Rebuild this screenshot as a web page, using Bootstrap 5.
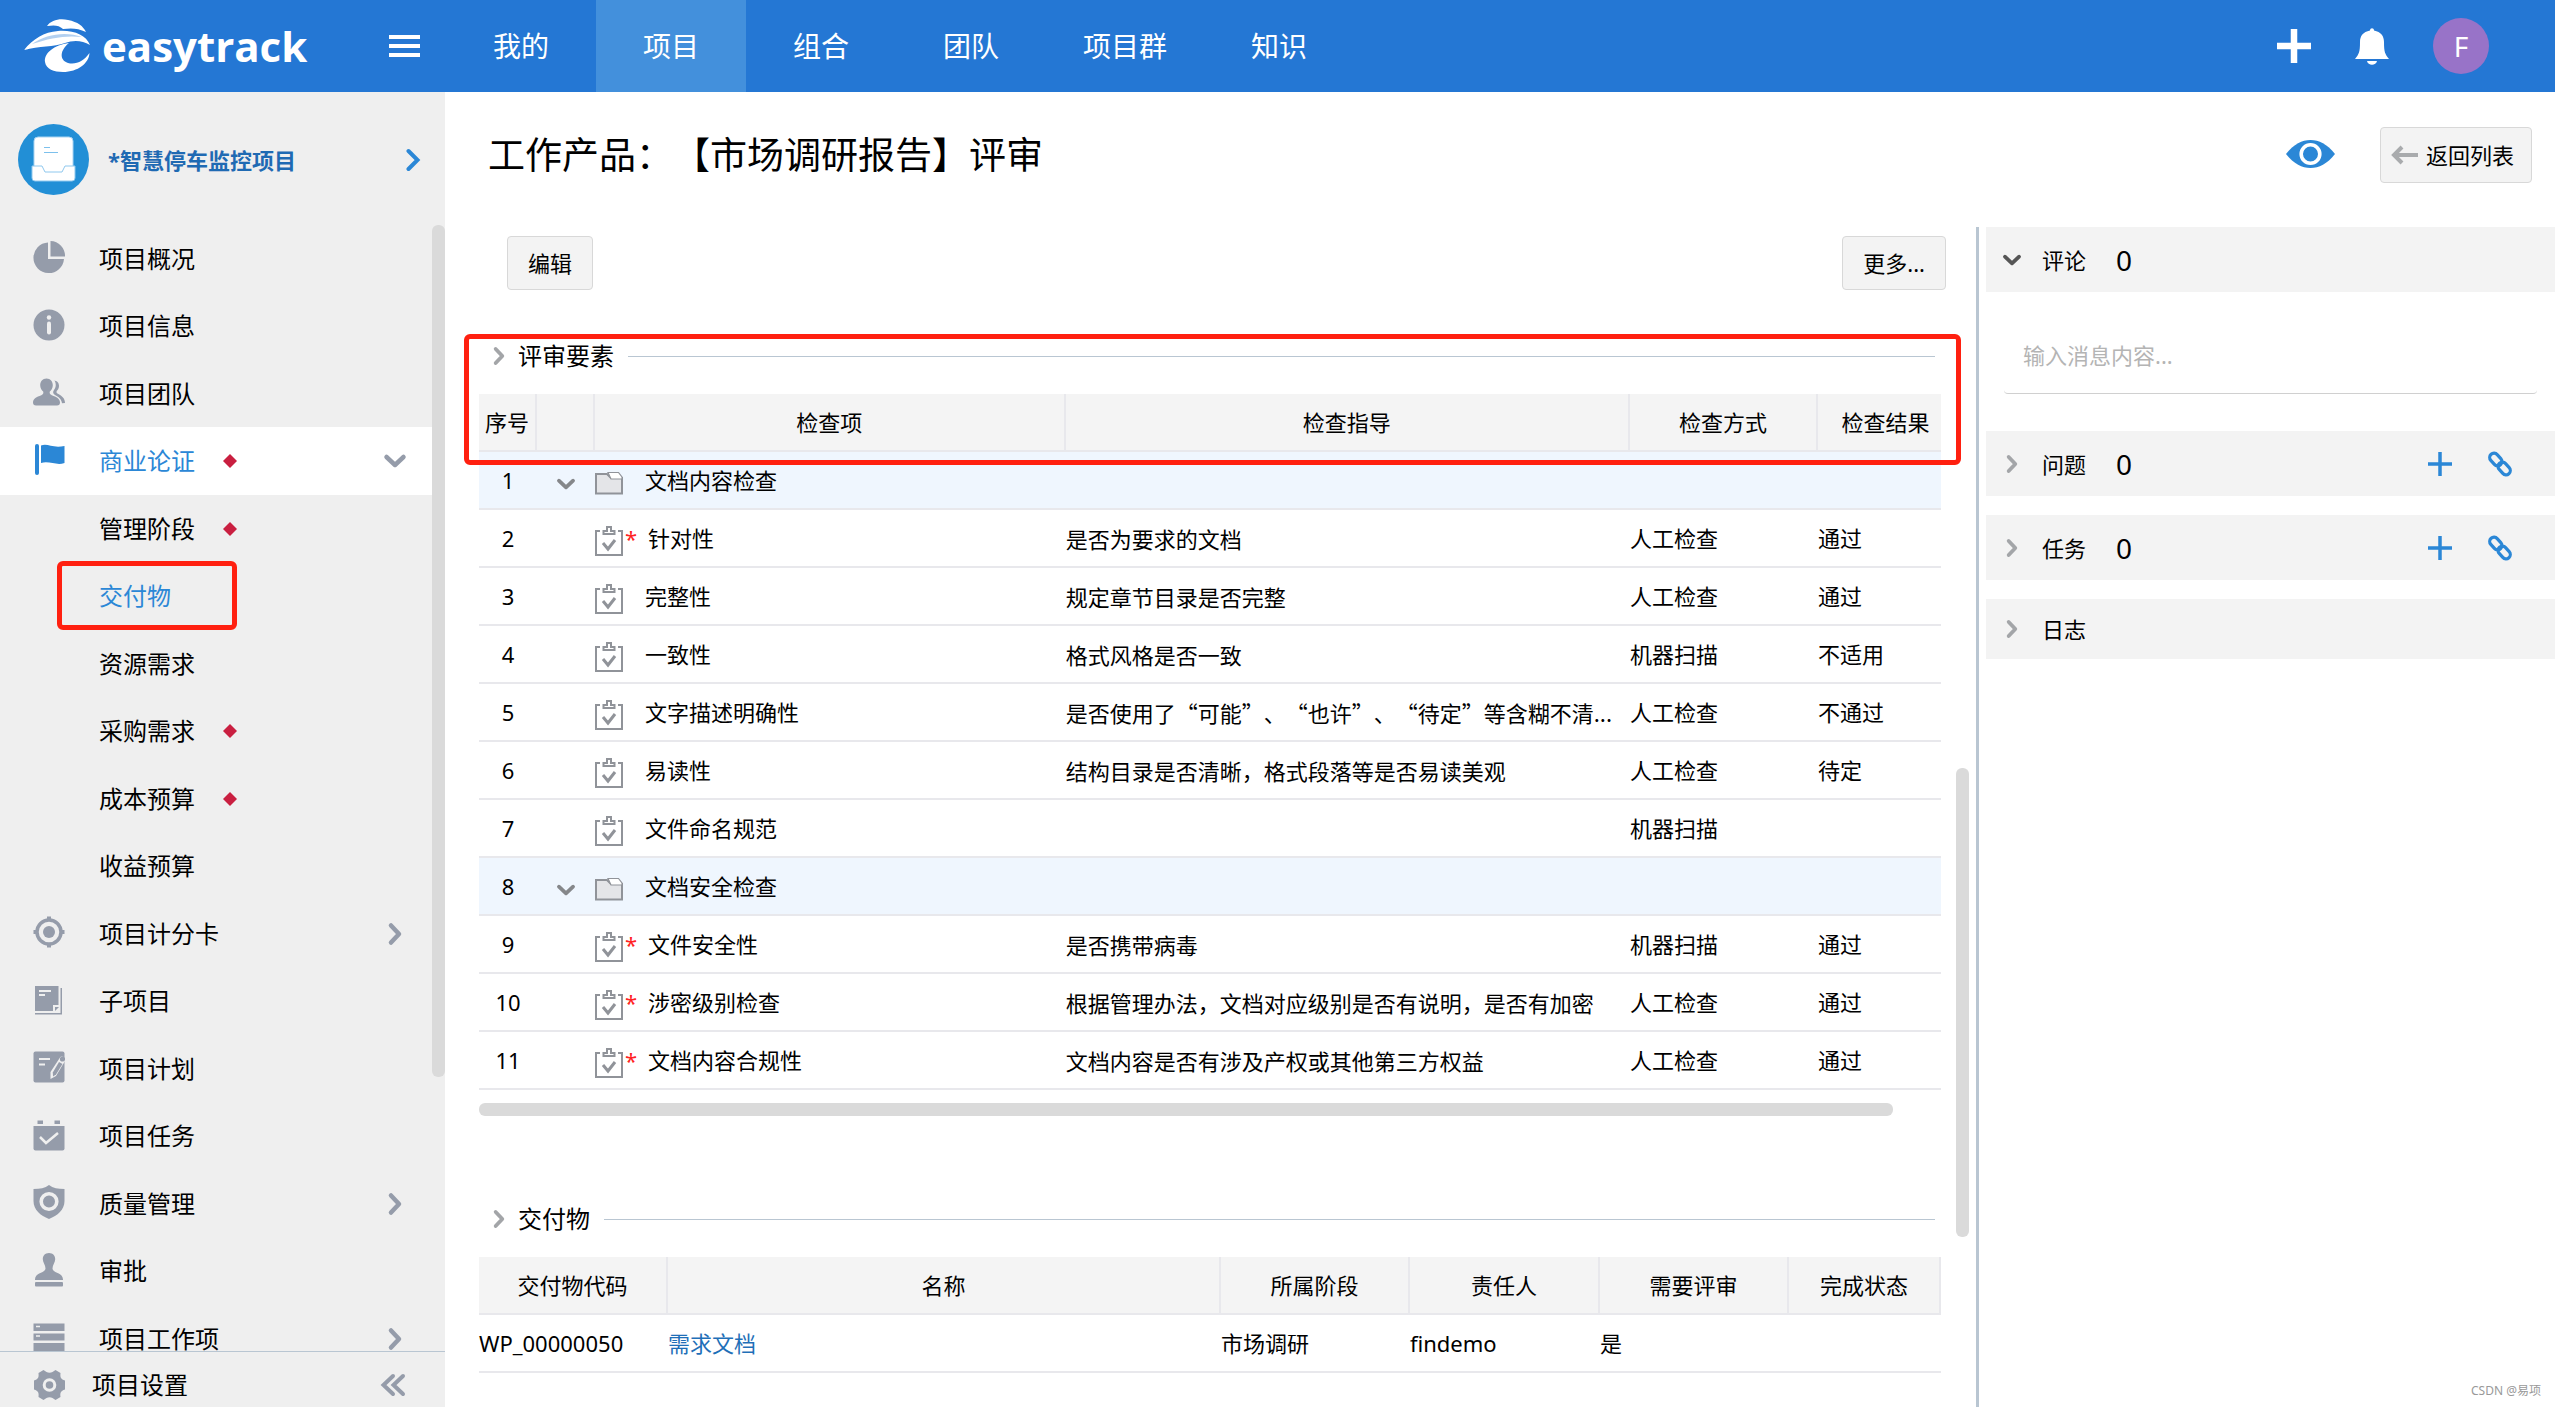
<!DOCTYPE html>
<html lang="zh-CN">
<head>
<meta charset="utf-8">
<meta name="viewport" content="width=device-width, initial-scale=1">
<title>easytrack</title>
<link href="https://cdn.jsdelivr.net/npm/bootstrap@5.3.0/dist/css/bootstrap.min.css" rel="stylesheet">
<style>
  :root { --bar: #2477d4; --blue: #2b87d6; --line: #b9c6d2; --grey: #959caa; --thumb: #dadada; --mark: #ff2010; }
  body { font-family: "Noto Sans", "Noto Sans CJK SC", sans-serif; font-size: 22px; line-height: 32px; color: #000; background: #fff; text-spacing-trim: space-all; }
  svg { display: block; flex: none; }
  button { color: inherit; }
  .icon-btn { border: 0; background: none; padding: 0; }

  /* top bar */
  .topbar { background: var(--bar); height: 92px; color: #fff; padding: 0 66px 0 24px; }
  .brand { width: 365px; gap: 11px; color: #fff; text-decoration: none; font-family: "Open Sans", "Noto Sans", sans-serif; font-weight: 700; font-size: 42px; line-height: 52px; }
  .topnav { margin-left: 26px; }
  .topnav .nav-link { color: #fff; font-size: 28px; line-height: 92px; min-width: 150px; padding: 0 37px; text-align: center; border-radius: 0; }
  .topnav .nav-link.active { background: #4390dc; }
  .avatar { width: 56px; height: 56px; background: #9873c8; font-size: 28px; }

  /* sidebar */
  .sidebar { width: 445px; background: #efefef; }
  .project { height: 133px; padding: 2px 24px 0 18px; gap: 19px; font-weight: 700; color: #1f6ab3; text-decoration: none; }
  .side-link { height: 67px; padding: 0 25px 0 33px; color: #000; font-size: 24px; line-height: 24px; text-decoration: none; position: relative; }
  .side-link:nth-child(even) { height: 68px; }
  .side-link .pic { width: 32px; height: 36px; margin: 0 34px 3px 0; color: var(--grey); }
  .side-link .dot { margin-left: 28px; }
  .side-link .arrow { margin-left: auto; color: var(--grey); }
  .side-link.current { background: #fff; color: #2b87d6; }
  .side-link.current .pic, .side-link.picked { color: var(--blue); }
  .side-thumb { width: 13px; height: 852px; max-height: 80%; border-radius: 6px; background: var(--thumb); }
  .side-foot { height: 56px; border-top: 1px solid var(--line); padding: 10px 39px 0 33px; font-size: 24px; color: var(--grey); }
  .side-foot a { color: #000; text-decoration: none; margin-left: 26px; }
  .callout { position: absolute; border: 5px solid var(--mark); border-radius: 6px; pointer-events: none; z-index: 2; }
  .callout-side { left: 57px; width: 180px; top: -1px; bottom: 0; }
  .callout-table { left: -15px; right: -20px; top: -6px; height: 131px; }

  /* page head */
  .page-head { height: 135px; padding: 0 23px 10px 43px; }
  .page-title { font-size: 37px; line-height: 52px; font-weight: 400; }
  .watch { margin: 0 45px 2px auto; }
  .tool-btn { background: #f3f3f3; border: 1px solid #d8d8d8; border-radius: 4px; font-size: 22px; line-height: 32px; color: #000; height: 54px; padding: 0 20px; }
  .tool-btn.back { height: 56px; padding: 0 17px 0 10px; gap: 8px; }
  .toolbar { padding: 9px 0 0 28px; margin-right: -5px; }

  /* content */
  .work { padding-left: 34px; }
  .gutter { width: 35px; padding: 541px 7px 0 15px; }
  .gutter div { width: 13px; height: 469px; border-radius: 6px; background: var(--thumb); }
  .fold { position: relative; margin-top: 50px; }
  .fold.second { margin-top: 87px; }
  .fold-head { height: 32px; margin: 0 6px 22px 10px; font-size: 24px; }
  .fold-head h2 { font-size: 24px; line-height: 32px; font-weight: 400; margin: 0 14px 0 9px; }
  .fold-head hr { margin: 0; border-color: var(--line); opacity: 1; }
  .sheet { table-layout: fixed; border-collapse: separate; border-spacing: 0; margin: 0; color: #000; --bs-table-color: #000; }
  .sheet > :not(caption) > * > * { height: 58px; padding: 0; border: 0; border-bottom: 2px solid #e8e8ec; vertical-align: middle; white-space: nowrap; color: #000; }
  .sheet > thead > tr > th { background: #f4f4f4; font-weight: 400; text-align: center; border-right: 2px solid #e8e8ec; }
  .sheet.checks > thead > tr > th:last-child { border-right: 0; padding-left: 12px; }
  .sheet > tbody > tr.group > td { background: #eff6fe; }
  .sheet .no { text-align: center; }
  .sheet .guide { font-family: "Noto Sans CJK SC", sans-serif; overflow: hidden; }
  .sheet a { color: #1f6fb8; text-decoration: none; }
  .item { display: flex; align-items: center; }
  .item svg { margin: 6px 22px 0 0; }
  .item.must svg { margin-right: 2px; }
  .item .star { width: 9px; margin-right: 14px; color: #f22; }
  .hthumb { height: 13px; width: 97%; max-width: calc(100% - 48px); margin-top: 13px; border-radius: 6px; background: var(--thumb); }

  /* side panels */
  .panels { width: 579px; border-left: 3px solid var(--line); padding-left: 7px; }
  .panel-head { height: 65px; background: #f3f3f3; padding: 0 42px 0 16px; margin-bottom: 19px; }
  .panel-head.open { margin-bottom: 24px; }
  .panel-head.short { height: 60px; }
  .panel-head .toggle { border: 0; background: none; padding: 0; gap: 20px; }
  .panel-head .num { font-size: 28px; margin-left: 30px; }
  .panel-head .ops { gap: 35px; color: var(--blue); }
  .message { height: 78px; margin: 0 18px 37px 18px; width: auto; border: 0; border-bottom: 1px solid #d0d0d0; border-radius: 4px; padding: 0 19px; font-size: 22px; }
  .message::placeholder { color: #b4b4b4; }
  .stamp { position: absolute; right: 14px; bottom: 8px; font-size: 12px; line-height: 16px; color: #999; }
</style>
</head>
<body class="vh-100 overflow-hidden d-flex flex-column">

<svg width="0" height="0" class="position-absolute" aria-hidden="true">
  <symbol id="i-right" viewBox="0 0 24 24"><path d="M8 3.500l8 8.500-8 8.500" fill="none" stroke="currentColor" stroke-width="4.500" stroke-linecap="round" stroke-linejoin="round"/></symbol>
  <symbol id="i-down" viewBox="0 0 24 24"><path d="M3.500 8l8.500 8 8.500-8" fill="none" stroke="currentColor" stroke-width="4.500" stroke-linecap="round" stroke-linejoin="round"/></symbol>
  <symbol id="i-dot" viewBox="0 0 14 14"><path d="M7 0l7 7-7 7-7-7z" fill="#c91f40"/></symbol>
  <symbol id="i-pie" viewBox="0 0 32 32"><path d="M15 1.500V18h16A15.300 15.300 0 1 1 15 1.500z" fill="currentColor"/><path d="M17.500 0A15 15 0 0 1 32 15.500H17.500z" fill="currentColor"/></symbol>
  <symbol id="i-info" viewBox="0 0 32 32"><circle cx="16" cy="16" r="15.500" fill="currentColor"/><circle cx="16" cy="8.500" r="2.200" fill="#efefef"/><rect x="14" y="12.500" width="4" height="13" rx="2" fill="#efefef"/></symbol>
  <symbol id="i-team" viewBox="0 0 32 32"><path d="M13.500 2.500c4 0 6.300 3 6.300 6.800 0 3-1.500 5-3 6.200-.5 2 .2 3 2 3.700 4.700 1.800 8.200 3.300 8.200 7.300 0 2-1 3-3 3H3c-2 0-3-1-3-3 0-4 3.500-5.500 8.300-7.300 1.800-.7 2.400-1.700 1.900-3.700-1.500-1.200-3-3.200-3-6.200 0-3.800 2.300-6.800 6.300-6.800z" fill="currentColor"/><path d="M20.500 4.500c4 0 5.500 2.800 5.500 5.500s-1.500 4-2.300 5c-.5 1.500 0 2 1.200 2.800 3.500 2 7.100 4.200 7.100 9.200l-3 .3c-.5-4.300-3.500-6.300-7-8.300-2-1.200-2.500-3-1-5 2-2.500 2.500-6 .5-9.500z" fill="currentColor"/></symbol>
  <symbol id="i-flag" viewBox="0 0 32 32"><rect x="2" y="0" width="4" height="31" rx="2" fill="currentColor"/><path d="M8 1.500c7-2.500 11 3 23.500.5v17c-8 3-15-2.500-23.500 0z" fill="currentColor"/></symbol>
  <symbol id="i-target" viewBox="0 0 32 32"><circle cx="16" cy="16" r="12" fill="none" stroke="currentColor" stroke-width="3.500"/><circle cx="16" cy="16" r="6" fill="currentColor"/><path d="M14 .5h4V5h-4zM14 27h4v4.500h-4zM.5 14H5v4H.5zM27 14h4.500v4H27z" fill="currentColor"/></symbol>
  <symbol id="i-book" viewBox="0 0 32 32"><path d="M2 2h23.500v19H20v6H2z" fill="currentColor"/><path d="M27.500 4H29v26.500H2V29h25.500zM22 23h4l-4 4z" fill="currentColor"/><path d="M6 7h12M6 11h6" stroke="#efefef" stroke-width="1.800"/></symbol>
  <symbol id="i-plan" viewBox="0 0 32 32"><rect x=".5" y=".5" width="31" height="31" rx="2" fill="currentColor"/><path d="M6 8h11M6 13.500h6" stroke="#efefef" stroke-width="2"/><path d="M17.500 21L27 6.500c1-1.800 4-1 5 .7V10L23 25l-5.500 3z" fill="#efefef"/><path d="M19.800 21.500L26 11l3.500 2-6.500 10.500-3 2z" fill="currentColor"/><circle cx="29.500" cy="8" r="2.600" fill="currentColor"/></symbol>
  <symbol id="i-task" viewBox="0 0 32 32"><path d="M.5 7h31v22.500a2 2 0 0 1-2 2h-27a2 2 0 0 1-2-2z" fill="currentColor"/><path d="M4.500 1.500h5.500V5H4.500zM21.500 1.500H27V5h-5.500z" fill="currentColor"/><path d="M7 18l6 6L25 14" fill="none" stroke="#efefef" stroke-width="2.500"/></symbol>
  <symbol id="i-shield" viewBox="0 0 32 34"><path d="M16 0c4 3 9 4 15.500 4v12c0 9-7 14.500-15.500 18C7.500 30.500.5 25 .5 16V4C7 4 12 3 16 0z" fill="currentColor"/><circle cx="16" cy="16.500" r="7.800" fill="none" stroke="#efefef" stroke-width="3.600"/></symbol>
  <symbol id="i-stamp" viewBox="0 0 32 34"><path d="M16 0c4 0 6.200 2.800 6.200 6.300 0 3.200-2.700 5.700-2.700 9.200 0 4.500 10.500 4 10.500 11V27H2v-.5c0-7 10.500-6.500 10.500-11 0-3.500-2.700-6-2.700-9.200C9.800 2.800 12 0 16 0z" fill="currentColor"/><rect x="2" y="29" width="28" height="4.500" rx="1" fill="currentColor"/></symbol>
  <symbol id="i-rows" viewBox="0 0 32 32"><path d="M.5 2.500h31V10H.5zM.5 12.500h31V19.500H.5zM.5 22h31v8H.5z" fill="currentColor"/><path d="M3 5.500h4M3 15h4" stroke="#efefef" stroke-width="1.500"/></symbol>
  <symbol id="i-gear" viewBox="0 0 32 32"><path d="M10 1l3 2c2 1 4 1 6 0l3-2 5 3c-.5 5 .5 6 4.500 7.500v9C27 22 26.500 24 27 28l-5 3-3-2c-2-1-4-1-6 0l-3 2-5-3c.5-4 0-6-4.500-7.500v-9C4.500 10 5.500 9 5 4z" fill="currentColor"/><circle cx="16" cy="16" r="5.300" fill="none" stroke="#efefef" stroke-width="3"/></symbol>
  <symbol id="i-dbl" viewBox="0 0 26 24"><path d="M13 3l-9.500 9 9.500 9M23 3l-9.500 9 9.500 9" fill="none" stroke="currentColor" stroke-width="4" stroke-linecap="round"/></symbol>
  <symbol id="i-clip" viewBox="0 0 28 30"><path d="M5 5H1v24h26V5h-4" fill="none" stroke="#909399" stroke-width="2"/><path d="M8.500 8V5H12V1h4v4h3.500v3z" fill="none" stroke="#909399" stroke-width="2"/><path d="M8 17l5 6 7-9" fill="none" stroke="#909399" stroke-width="3"/></symbol>
  <symbol id="i-folder" viewBox="0 0 28 24"><path d="M1 3h11l4 4h11v15.500H1z" fill="#e4e5e8" stroke="#909399" stroke-width="2"/><path d="M13 1.500h10.500L27 6v2H16z" fill="#fff" stroke="#909399" stroke-width="1.200"/></symbol>
  <symbol id="i-plus" viewBox="0 0 24 24"><path d="M12 0v24M0 12h24" stroke="currentColor" stroke-width="3.500"/></symbol>
  <symbol id="i-link" viewBox="0 0 26 26"><g fill="none" stroke="currentColor" stroke-width="3.200"><rect x="-7" y="-4.300" width="14" height="8.600" rx="4.300" transform="translate(8.800 8.500) rotate(48)"/><rect x="-7" y="-4.300" width="14" height="8.600" rx="4.300" transform="translate(17.200 17.500) rotate(48)"/></g></symbol>
</svg>

<header class="topbar d-flex align-items-center flex-shrink-0">
  <a class="brand d-flex align-items-center" href="#">
    <svg width="67" height="54" viewBox="0 0 67 54" fill="#fff"><path d="M23 7C27 1 36-1 44 1c10 2 15 6 18 12-8-4-15-4-23-3-4-4-9-4-16-3z"/><path d="M0 31C9 20 20 13 34 12c16-1 28 4 32 14-8-5-17-5-25-2C30 28 15 27 0 31z"/><path d="M8 25C22 15 42 12 58 18 42 16 26 19 8 25z" fill="#2477d4" opacity=".35"/><path d="M45 24C30 26 20 34 21 43c1 7 9 10 18 10 15 0 26-9 26.500-19C60 42 52 46 44 44c-9-3-8-13 1-20z"/></svg>
    <span>easytrack</span>
  </a>
  <button class="icon-btn" type="button" aria-label="菜单"><svg width="31" height="22" viewBox="0 0 31 22"><path d="M0 2h31M0 11h31M0 20h31" stroke="#fff" stroke-width="4"/></svg></button>
  <nav class="nav topnav flex-nowrap">
    <a class="nav-link" href="#">我的</a>
    <a class="nav-link active" href="#" aria-current="page">项目</a>
    <a class="nav-link" href="#">组合</a>
    <a class="nav-link" href="#">团队</a>
    <a class="nav-link" href="#">项目群</a>
    <a class="nav-link" href="#">知识</a>
  </nav>
  <div class="d-flex align-items-center ms-auto" style="gap:44px">
    <button class="icon-btn" type="button" aria-label="新建"><svg width="34" height="34" viewBox="0 0 34 34"><path d="M17 0v34M0 17h34" stroke="#fff" stroke-width="6.500"/></svg></button>
    <button class="icon-btn" type="button" aria-label="通知"><svg width="34" height="37" viewBox="0 0 34 37" fill="#fff"><path d="M15 2.500c0-3 4-3 4 0C26 4 29 8 29 14c0 10 1 12 5 17H0c4-5 5-7 5-17C5 8 8 4 15 2.500zM12 33h10c-1 5-9 5-10 0z"/></svg></button>
    <a class="avatar rounded-circle d-flex align-items-center justify-content-center text-white text-decoration-none" href="#">F</a>
  </div>
</header>

<div class="d-flex flex-grow-1 overflow-hidden">
  <aside class="sidebar d-flex flex-column flex-shrink-0">
    <a class="project d-flex align-items-center flex-shrink-0" href="#">
      <svg width="71" height="71" viewBox="0 0 71 71"><circle cx="35.500" cy="35.500" r="35.500" fill="#228fd6"/><rect x="16" y="13" width="39" height="38" rx="4" fill="#fff" stroke="#a9d4f2"/><path d="M26 23.500h6M26 28.500h14" stroke="#7cc0ec"/><path d="M14 42h10l3 6h17l3-6h10v12a3 3 0 0 1-3 3H17a3 3 0 0 1-3-3z" fill="#fff" stroke="#8fc8ee"/></svg>
      <span>*智慧停车监控项目</span>
      <svg class="ms-auto" width="15" height="24" viewBox="0 0 15 24"><path d="M2.500 3l9 9-9 9" fill="none" stroke="#2b87d6" stroke-width="4" stroke-linecap="round"/></svg>
    </a>
    <div class="d-flex flex-grow-1 overflow-hidden">
      <nav class="flex-grow-1">
        <a class="side-link d-flex align-items-center" href="#"><svg class="pic"><use href="#i-pie"/></svg>项目概况</a>
        <a class="side-link d-flex align-items-center" href="#"><svg class="pic"><use href="#i-info"/></svg>项目信息</a>
        <a class="side-link d-flex align-items-center" href="#"><svg class="pic"><use href="#i-team"/></svg>项目团队</a>
        <a class="side-link current d-flex align-items-center" href="#"><svg class="pic"><use href="#i-flag"/></svg>商业论证<svg class="dot" width="14" height="14"><use href="#i-dot"/></svg><svg class="arrow" width="24" height="24"><use href="#i-down"/></svg></a>
        <a class="side-link d-flex align-items-center" href="#"><span class="pic"></span>管理阶段<svg class="dot" width="14" height="14"><use href="#i-dot"/></svg></a>
        <a class="side-link picked d-flex align-items-center" href="#"><span class="pic"></span>交付物<span class="callout callout-side"></span></a>
        <a class="side-link d-flex align-items-center" href="#"><span class="pic"></span>资源需求</a>
        <a class="side-link d-flex align-items-center" href="#"><span class="pic"></span>采购需求<svg class="dot" width="14" height="14"><use href="#i-dot"/></svg></a>
        <a class="side-link d-flex align-items-center" href="#"><span class="pic"></span>成本预算<svg class="dot" width="14" height="14"><use href="#i-dot"/></svg></a>
        <a class="side-link d-flex align-items-center" href="#"><span class="pic"></span>收益预算</a>
        <a class="side-link d-flex align-items-center" href="#"><svg class="pic"><use href="#i-target"/></svg>项目计分卡<svg class="arrow" width="24" height="24"><use href="#i-right"/></svg></a>
        <a class="side-link d-flex align-items-center" href="#"><svg class="pic"><use href="#i-book"/></svg>子项目</a>
        <a class="side-link d-flex align-items-center" href="#"><svg class="pic"><use href="#i-plan"/></svg>项目计划</a>
        <a class="side-link d-flex align-items-center" href="#"><svg class="pic"><use href="#i-task"/></svg>项目任务</a>
        <a class="side-link d-flex align-items-center" href="#"><svg class="pic"><use href="#i-shield"/></svg>质量管理<svg class="arrow" width="24" height="24"><use href="#i-right"/></svg></a>
        <a class="side-link d-flex align-items-center" href="#"><svg class="pic"><use href="#i-stamp"/></svg>审批</a>
        <a class="side-link d-flex align-items-center" href="#"><svg class="pic"><use href="#i-rows"/></svg>项目工作项<svg class="arrow" width="24" height="24"><use href="#i-right"/></svg></a>
      </nav>
      <div class="side-thumb"></div>
    </div>
    <div class="side-foot d-flex align-items-center flex-shrink-0">
      <svg width="33" height="32"><use href="#i-gear"/></svg><a href="#">项目设置</a>
      <button class="icon-btn ms-auto" type="button" aria-label="收起"><svg width="26" height="24"><use href="#i-dbl"/></svg></button>
    </div>
  </aside>

  <main class="flex-grow-1 d-flex flex-column overflow-hidden">
    <div class="page-head d-flex align-items-center flex-shrink-0">
      <h1 class="page-title m-0">工作产品：【市场调研报告】评审</h1>
      <button class="icon-btn watch" type="button" aria-label="关注"><svg width="49" height="28" viewBox="0 0 49 28"><path d="M0 14C8 4 16 0 24.500 0S41 4 49 14C41 24 33 28 24.500 28S8 24 0 14z" fill="#2b87d6"/><circle cx="24.500" cy="14" r="9.300" fill="none" stroke="#fff" stroke-width="3.600"/></svg></button>
      <button class="tool-btn back d-flex align-items-center" type="button"><svg width="27" height="22" viewBox="0 0 27 22"><path d="M11 3l-8 8 8 8M3 11h24" fill="none" stroke="#a9abad" stroke-width="4"/></svg>返回列表</button>
    </div>

    <div class="d-flex flex-grow-1 overflow-hidden">
      <div class="work flex-grow-1">
        <div class="toolbar d-flex justify-content-between">
          <button class="tool-btn" type="button">编辑</button>
          <button class="tool-btn" type="button">更多...</button>
        </div>

        <section class="fold">
          <div class="callout callout-table"></div>
          <div class="fold-head d-flex align-items-center">
            <svg width="20" height="20" color="#a3a5a8"><use href="#i-right"/></svg><h2>评审要素</h2><hr class="flex-grow-1">
          </div>
          <table class="table sheet checks">
            <colgroup><col style="width:58px"><col style="width:58px"><col style="width:32.2%"><col><col style="width:188px"><col style="width:123px"></colgroup>
            <thead><tr><th scope="col">序号</th><th></th><th scope="col">检查项</th><th scope="col">检查指导</th><th scope="col">检查方式</th><th scope="col">检查结果</th></tr></thead>
            <tbody>
              <tr class="group"><td class="no">1</td><td><svg class="mx-auto mt-2" width="20" height="20" color="#85878a"><use href="#i-down"/></svg></td><td><div class="item"><svg width="28" height="24"><use href="#i-folder"/></svg>文档内容检查</div></td><td></td><td></td><td></td></tr>
              <tr><td class="no">2</td><td></td><td><div class="item must"><svg width="28" height="30"><use href="#i-clip"/></svg><span class="star">*</span>针对性</div></td><td class="guide">是否为要求的文档</td><td>人工检查</td><td>通过</td></tr>
              <tr><td class="no">3</td><td></td><td><div class="item"><svg width="28" height="30"><use href="#i-clip"/></svg>完整性</div></td><td class="guide">规定章节目录是否完整</td><td>人工检查</td><td>通过</td></tr>
              <tr><td class="no">4</td><td></td><td><div class="item"><svg width="28" height="30"><use href="#i-clip"/></svg>一致性</div></td><td class="guide">格式风格是否一致</td><td>机器扫描</td><td>不适用</td></tr>
              <tr><td class="no">5</td><td></td><td><div class="item"><svg width="28" height="30"><use href="#i-clip"/></svg>文字描述明确性</div></td><td class="guide">是否使用了“可能”、“也许”、“待定”等含糊不清...</td><td>人工检查</td><td>不通过</td></tr>
              <tr><td class="no">6</td><td></td><td><div class="item"><svg width="28" height="30"><use href="#i-clip"/></svg>易读性</div></td><td class="guide">结构目录是否清晰，格式段落等是否易读美观</td><td>人工检查</td><td>待定</td></tr>
              <tr><td class="no">7</td><td></td><td><div class="item"><svg width="28" height="30"><use href="#i-clip"/></svg>文件命名规范</div></td><td></td><td>机器扫描</td><td></td></tr>
              <tr class="group"><td class="no">8</td><td><svg class="mx-auto mt-2" width="20" height="20" color="#85878a"><use href="#i-down"/></svg></td><td><div class="item"><svg width="28" height="24"><use href="#i-folder"/></svg>文档安全检查</div></td><td></td><td></td><td></td></tr>
              <tr><td class="no">9</td><td></td><td><div class="item must"><svg width="28" height="30"><use href="#i-clip"/></svg><span class="star">*</span>文件安全性</div></td><td class="guide">是否携带病毒</td><td>机器扫描</td><td>通过</td></tr>
              <tr><td class="no">10</td><td></td><td><div class="item must"><svg width="28" height="30"><use href="#i-clip"/></svg><span class="star">*</span>涉密级别检查</div></td><td class="guide">根据管理办法，文档对应级别是否有说明，是否有加密</td><td>人工检查</td><td>通过</td></tr>
              <tr><td class="no">11</td><td></td><td><div class="item must"><svg width="28" height="30"><use href="#i-clip"/></svg><span class="star">*</span>文档内容合规性</div></td><td class="guide">文档内容是否有涉及产权或其他第三方权益</td><td>人工检查</td><td>通过</td></tr>
            </tbody>
          </table>
          <div class="hthumb"></div>
        </section>

        <section class="fold second">
          <div class="fold-head d-flex align-items-center">
            <svg width="20" height="20" color="#a3a5a8"><use href="#i-right"/></svg><h2>交付物</h2><hr class="flex-grow-1">
          </div>
          <table class="table sheet">
            <colgroup><col style="width:189px"><col><col style="width:189px"><col style="width:190px"><col style="width:189px"><col style="width:152px"></colgroup>
            <thead><tr><th scope="col">交付物代码</th><th scope="col">名称</th><th scope="col">所属阶段</th><th scope="col">责任人</th><th scope="col">需要评审</th><th scope="col">完成状态</th></tr></thead>
            <tbody><tr><td>WP_00000050</td><td><a href="#">需求文档</a></td><td>市场调研</td><td>findemo</td><td>是</td><td></td></tr></tbody>
          </table>
        </section>
      </div>
      <div class="gutter flex-shrink-0"><div></div></div>

      <aside class="panels flex-shrink-0">
        <div class="panel-head open d-flex align-items-center">
          <button class="toggle d-flex align-items-center" type="button"><svg width="20" height="20" color="#555"><use href="#i-down"/></svg><label for="message">评论</label></button><span class="num">0</span>
        </div>
        <div class="d-flex flex-column"><input class="form-control message" id="message" type="text" placeholder="输入消息内容..."></div>
        <div class="panel-head d-flex align-items-center">
          <button class="toggle d-flex align-items-center" type="button"><svg width="20" height="20" color="#a3a5a8"><use href="#i-right"/></svg>问题</button><span class="num">0</span>
          <div class="ops d-flex align-items-center ms-auto"><button class="icon-btn" type="button" aria-label="新增问题"><svg width="24" height="24"><use href="#i-plus"/></svg></button><button class="icon-btn" type="button" aria-label="关联问题"><svg width="26" height="26"><use href="#i-link"/></svg></button></div>
        </div>
        <div class="panel-head d-flex align-items-center">
          <button class="toggle d-flex align-items-center" type="button"><svg width="20" height="20" color="#a3a5a8"><use href="#i-right"/></svg>任务</button><span class="num">0</span>
          <div class="ops d-flex align-items-center ms-auto"><button class="icon-btn" type="button" aria-label="新增任务"><svg width="24" height="24"><use href="#i-plus"/></svg></button><button class="icon-btn" type="button" aria-label="关联任务"><svg width="26" height="26"><use href="#i-link"/></svg></button></div>
        </div>
        <div class="panel-head short d-flex align-items-center">
          <button class="toggle d-flex align-items-center" type="button"><svg width="20" height="20" color="#a3a5a8"><use href="#i-right"/></svg>日志</button>
        </div>
      </aside>
    </div>
  </main>
</div>
<div class="stamp">CSDN @易项</div>
<script src="https://cdn.jsdelivr.net/npm/bootstrap@5.3.0/dist/js/bootstrap.bundle.min.js"></script>
</body>
</html>
